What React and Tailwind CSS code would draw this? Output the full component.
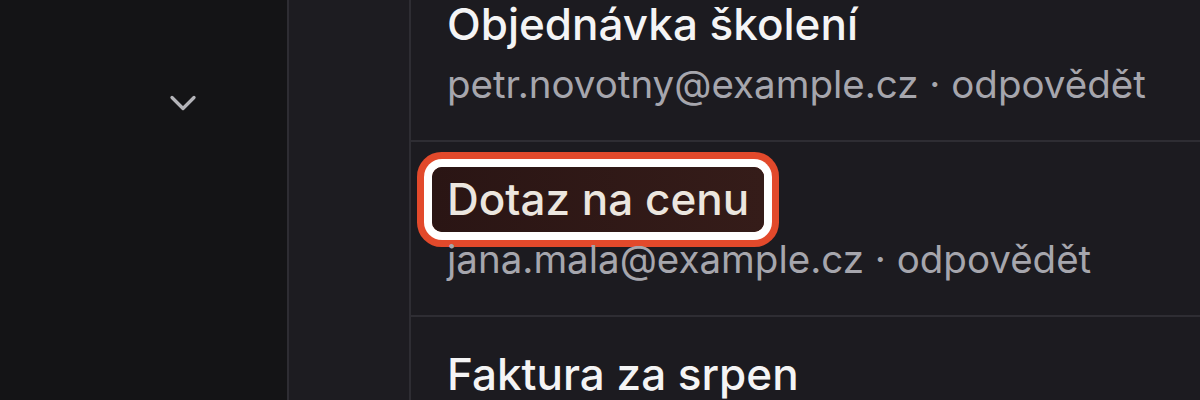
import React from 'react';
import { ChevronDown } from 'lucide-react';

const messages = [
  { id: 1, subject: 'Objednávka školení', from: 'petr.novotny@example.cz' },
  { id: 2, subject: 'Dotaz na cenu', from: 'jana.mala@example.cz', focused: true },
  { id: 3, subject: 'Faktura za srpen', from: 'info@example.cz' },
];

function MessageRow({ msg }) {
  return (
    <li className="border-b-2 border-[#2e2d33] pl-[36px] pt-[24px] pb-[28px]">
      <div className="h-[66px] flex items-center font-medium">
        {msg.focused ? (
          <span className="-mx-[15px] px-[15px] h-[65px] flex items-center rounded-[10px] bg-gradient-to-r from-[#2a1514] to-[#351c19] text-[#ece6df] shadow-[0_0_0_8px_#ffffff,0_0_0_15px_#e2492b]">
            {msg.subject}
          </span>
        ) : (
          <span className="text-[#f4f4f5]">{msg.subject}</span>
        )}
      </div>
      <div className="h-[55px] flex items-center text-[38.5px] leading-[55px] text-[#a6a6ad]">
        {msg.from} · odpovědět
      </div>
    </li>
  );
}

export default function App() {
  return (
    <div className="flex h-[400px] w-[1200px] overflow-hidden bg-[#141416] font-['Inter','Noto_Sans',sans-serif]">
      {/* folder sidebar, collapsed group */}
      <aside className="w-[289px] shrink-0 border-r-2 border-[#2e2d33] bg-[#141416]">
        <div className="flex justify-end pt-[81px] pr-[82px]">
          <ChevronDown size={44} strokeWidth={1.8} className="text-[#b4b4b9]" />
        </div>
      </aside>

      <section className="w-[122px] shrink-0 border-r-2 border-[#2e2d33] bg-[#1d1c21]" />

      <main className="flex-1 bg-[#1c1b20]">
        <ul className="-mt-[33px] text-[44px] leading-[66px]">
          {messages.map((m) => (
            <MessageRow key={m.id} msg={m} />
          ))}
        </ul>
      </main>
    </div>
  );
}
